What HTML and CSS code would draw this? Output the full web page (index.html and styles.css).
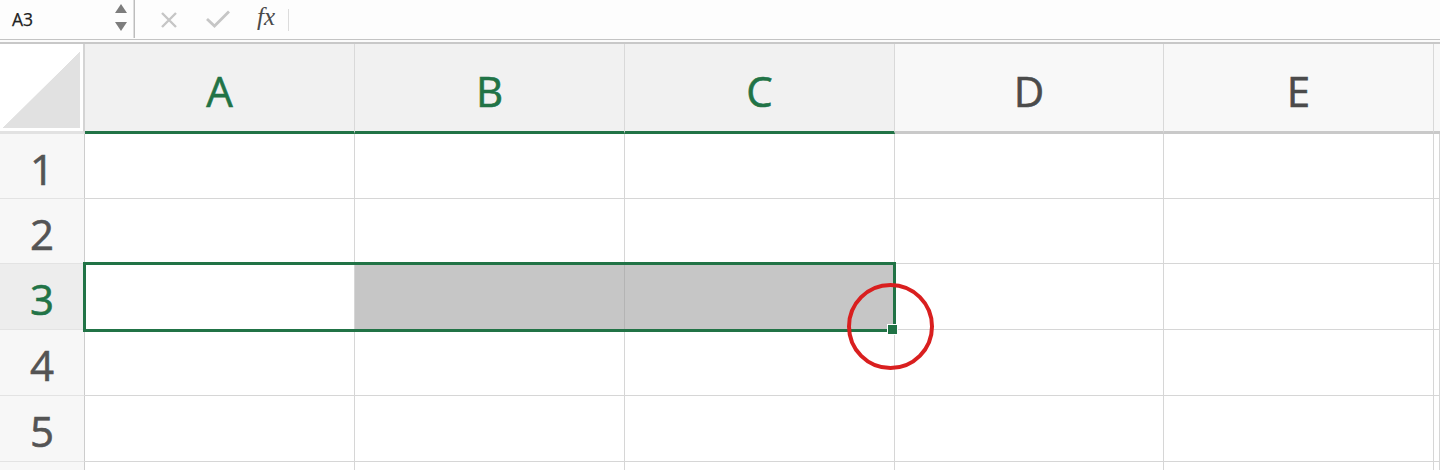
FILE: index.html
```html
<!DOCTYPE html>
<html>
<head>
<meta charset="utf-8">
<link rel="stylesheet" href="styles.css">
</head>
<body>
<div class="app">
  <div class="formula-bar">
    <div class="namebox">
      <span class="name">A3</span>
      <svg class="spin" width="12" height="32" viewBox="0 0 12 32">
        <polygon points="6,4 12,13 0,13" fill="#7d7d7d"/>
        <polygon points="0,22 12,22 6,31" fill="#7d7d7d"/>
      </svg>
    </div>
    <div class="sep"></div>
    <svg class="icon-x" width="18" height="18" viewBox="0 0 18 18">
      <path d="M2 2 L16 16 M16 2 L2 16" stroke="#c6c6c6" stroke-width="2.4" fill="none"/>
    </svg>
    <svg class="icon-check" width="24" height="18" viewBox="0 0 24 18">
      <path d="M1 9 L8.5 16 L23 1.5" stroke="#c6c6c6" stroke-width="2.8" fill="none"/>
    </svg>
    <span class="fx">fx</span>
    <div class="sep2"></div>
    <div class="input"></div>
  </div>
  <div class="gap"></div>
  <div class="sheet">
    <div class="grid">
      <div class="corner"><div class="tri"></div></div>
      <div class="ch sel">A</div>
      <div class="ch sel">B</div>
      <div class="ch sel">C</div>
      <div class="ch">D</div>
      <div class="ch">E</div>
      <div class="ch rest"></div>

      <div class="rh">1</div>
      <div class="c"></div><div class="c"></div><div class="c"></div><div class="c"></div><div class="c"></div><div class="c"></div>

      <div class="rh">2</div>
      <div class="c"></div><div class="c"></div><div class="c"></div><div class="c"></div><div class="c"></div><div class="c"></div>

      <div class="rh rsel">3</div>
      <div class="c"></div><div class="c fill"></div><div class="c fill"></div><div class="c"></div><div class="c"></div><div class="c"></div>

      <div class="rh">4</div>
      <div class="c"></div><div class="c"></div><div class="c"></div><div class="c"></div><div class="c"></div><div class="c"></div>

      <div class="rh">5</div>
      <div class="c"></div><div class="c"></div><div class="c"></div><div class="c"></div><div class="c"></div><div class="c"></div>

      <div class="rh last"></div>
      <div class="c last"></div><div class="c last"></div><div class="c last"></div><div class="c last"></div><div class="c last"></div><div class="c last"></div>
    </div>
    <div class="selection"></div>
    <div class="handle"></div>
    <div class="circle"></div>
  </div>
</div>
</body>
</html>
```

FILE: styles.css
```css
* { box-sizing: border-box; }
html, body { margin: 0; padding: 0; background: #ffffff; }
body { width: 1440px; height: 470px; overflow: hidden; font-family: "Open Sans", "DejaVu Sans", sans-serif; }

.app { width: 1440px; height: 470px; display: flex; flex-direction: column; }

.formula-bar {
  height: 40px;
  flex: 0 0 40px;
  background: #fdfdfd;
  border-bottom: 1px solid #c4c4c4;
  display: flex;
  align-items: center;
}
.namebox {
  width: 133px;
  height: 100%;
  display: flex;
  align-items: center;
  justify-content: space-between;
  padding: 0 6px 2px 12px;
}
.name { font-size: 17.5px; color: #222222; -webkit-text-stroke: 0.25px #222222; }
.spin { align-self: flex-start; }
.sep { width: 2px; height: 38px; align-self: flex-start; background: #bdbdbd; border-left: 1px solid #dedede; }
.icon-x { margin-left: 25px; margin-top: 1px; }
.icon-check { margin-left: 28px; margin-top: -1px; }
.fx {
  margin-left: 27px;
  font-family: "Liberation Serif", "DejaVu Serif", serif;
  font-style: italic;
  font-size: 25px;
  color: #4a4a4a;
  line-height: 1;
  margin-top: -6px;
}
.sep2 { width: 1px; height: 22px; background: #dcdcdc; margin-left: 13px; }
.input { flex: 1; }

.gap { height: 2px; flex: 0 0 2px; background: #fbfbfb; }

.sheet {
  position: relative;
  flex: 1;
  border-top: 2px solid #c8c8c8;
}
.grid {
  display: grid;
  grid-template-columns: 85px 270px 270px 270px 269px 270px 1fr;
  grid-template-rows: 90px 65px 65px 66px 66px 66px 1fr;
  height: 100%;
}

.corner {
  background: #ffffff;
  border-right: 2px solid #d4d4d4;
  border-bottom: 3px solid #e2e2e2;
  padding: 8px 3px 3px 3px;
}
.tri {
  width: 100%;
  height: 100%;
  background: linear-gradient(to top left, #e1e1e1 50%, transparent 50.5%);
}

.ch {
  background: #f8f8f8;
  border-right: 1px solid #d9d9d9;
  border-bottom: 3px solid #c9c9c9;
  display: flex;
  align-items: center;
  justify-content: center;
  font-size: 42px;
  color: #4b4b4b;
  -webkit-text-stroke: 0.6px #4b4b4b;
  padding-top: 6px;
}
.ch.sel {
  background: #f1f1f1;
  color: #217346;
  -webkit-text-stroke-color: #217346;
  border-bottom-color: #217346;
}
.ch.rest { border-right: none; }

.rh {
  background: #f7f7f7;
  border-right: 1px solid #cdcdcd;
  border-bottom: 1px solid #e3e3e3;
  display: flex;
  align-items: center;
  justify-content: center;
  font-size: 42px;
  color: #545454;
  -webkit-text-stroke: 0.6px #545454;
  padding-top: 4px;
}
.rh.rsel { background: #ededed; color: #217346; -webkit-text-stroke-color: #217346; }
.rh.last, .c.last { border-bottom: none; }

.c {
  border-right: 1px solid #d6d6d6;
  border-bottom: 1px solid #d6d6d6;
  background: #ffffff;
}
.c.fill { background: #c6c6c6; border-right-color: #b4b4b4; }

.selection {
  position: absolute;
  left: 83px;
  top: 218px;
  width: 813px;
  height: 70px;
  border: 3px solid #217346;
}
.handle {
  position: absolute;
  left: 887px;
  top: 280px;
  width: 11px;
  height: 11px;
  background: #217346;
  border: 1px solid #ffffff;
}
.circle {
  position: absolute;
  left: 847px;
  top: 239px;
  width: 87px;
  height: 87px;
  border: 4px solid #d91f1f;
  border-radius: 50%;
}
```
